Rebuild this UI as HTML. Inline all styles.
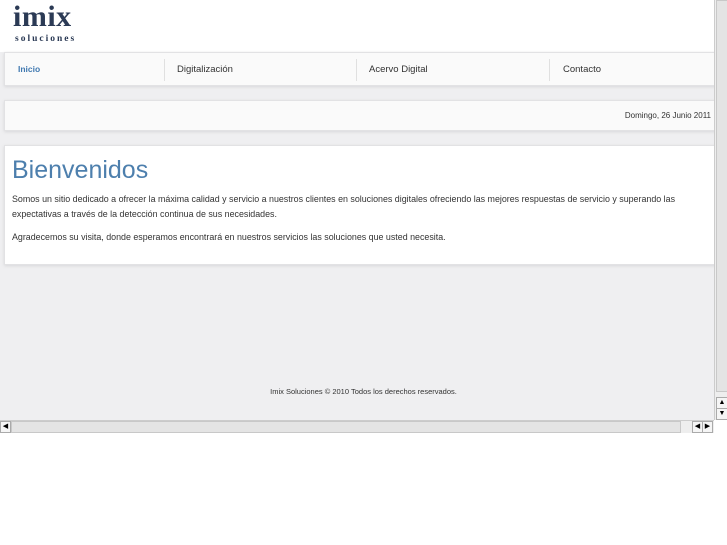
<!DOCTYPE html>
<html><head><meta charset="utf-8"><style>
body{margin:0;width:727px;height:545px;background:#fff;font-family:"Liberation Sans",sans-serif;position:relative;overflow:hidden}
#vp{position:absolute;left:0;top:0;width:714px;height:420px;background:#efeff1;overflow:hidden}
#hd{position:absolute;left:0;top:0;width:714px;height:52px;background:#fff}
.box{position:absolute;left:4px;width:712px;background:#fafafa;border:1px solid #e2e2e4;box-shadow:0 1px 3px #d8d8da}
#nav{top:52px;height:32px}
#nav span{position:absolute;top:11px;font-size:9.5px;color:#333}
.sep{position:absolute;top:6px;width:1px;height:22px;background:#e0e0e0}
#date{top:100px;height:29px}
#ct{top:145px;height:118px;background:#fff}
h1{position:absolute;left:7px;top:10px;margin:0;font-weight:normal;font-size:25px;color:#4d7fad}
p{position:absolute;left:7px;margin:0;font-size:8.9px;color:#333;line-height:15px;width:682px}
#vs{position:absolute;left:714px;top:0;width:13px;height:420px;background:#eee;border-left:1px solid #ccc}
#hs{position:absolute;left:0;top:420px;width:714px;height:12px;background:#eee;border-top:1px solid #ccc}
</style></head><body>
<div id="vp">
<div id="hd">
<div style="position:absolute;left:13px;top:0px;font-family:'Liberation Serif',serif;font-weight:bold;font-size:30px;color:#2b3a55;letter-spacing:0.5px">imix</div>
<div style="position:absolute;left:15px;top:34px;font-family:'Liberation Serif',serif;font-weight:bold;font-size:9.5px;color:#2b3a55;letter-spacing:2px">soluciones</div>
</div>
<div class="box" id="nav">
<span style="left:13px;color:#3f78b0;font-weight:bold;font-size:8.5px">Inicio</span>
<div class="sep" style="left:159px"></div>
<span style="left:172px">Digitalización</span>
<div class="sep" style="left:351px"></div>
<span style="left:364px">Acervo Digital</span>
<div class="sep" style="left:544px"></div>
<span style="left:558px">Contacto</span>
</div>
<div class="box" id="date"><span style="position:absolute;right:6px;top:10px;font-size:8px;color:#333">Domingo, 26 Junio 2011</span></div>
<div class="box" id="ct">
<h1>Bienvenidos</h1>
<p style="top:46px">Somos un sitio dedicado a ofrecer la máxima calidad y servicio a nuestros clientes en soluciones digitales ofreciendo las mejores respuestas de servicio y superando las expectativas a través de la detección continua de sus necesidades.</p>
<p style="top:84px">Agradecemos su visita, donde esperamos encontrará en nuestros servicios las soluciones que usted necesita.</p>
</div>
<div style="position:absolute;left:0;width:727px;top:387px;text-align:center;font-size:7.5px;color:#333">Imix Soluciones © 2010 Todos los derechos reservados.</div>
</div>
<div id="vs">
<div style="position:absolute;left:1px;top:0;width:10px;height:390px;background:#e4e4e4;border:1px solid #c8c8c8"></div>
<div style="position:absolute;left:1px;top:397px;width:10px;height:10px;border:1px solid #aaa;background:#f5f5f5;font-size:7px;text-align:center;line-height:10px">▲</div>
<div style="position:absolute;left:1px;top:408px;width:10px;height:10px;border:1px solid #aaa;background:#f5f5f5;font-size:7px;text-align:center;line-height:10px">▼</div>
</div>
<div id="hs">
<div style="position:absolute;left:0;top:0;width:9px;height:10px;border:1px solid #aaa;background:#f5f5f5;font-size:7px;text-align:center;line-height:10px">◀</div>
<div style="position:absolute;left:11px;top:0;width:668px;height:10px;background:#e4e4e4;border:1px solid #c8c8c8"></div>
<div style="position:absolute;left:692px;top:0;width:9px;height:10px;border:1px solid #aaa;background:#f5f5f5;font-size:7px;text-align:center;line-height:10px">◀</div>
<div style="position:absolute;left:702px;top:0;width:9px;height:10px;border:1px solid #aaa;background:#f5f5f5;font-size:7px;text-align:center;line-height:10px">▶</div>
</div>
</body></html>
